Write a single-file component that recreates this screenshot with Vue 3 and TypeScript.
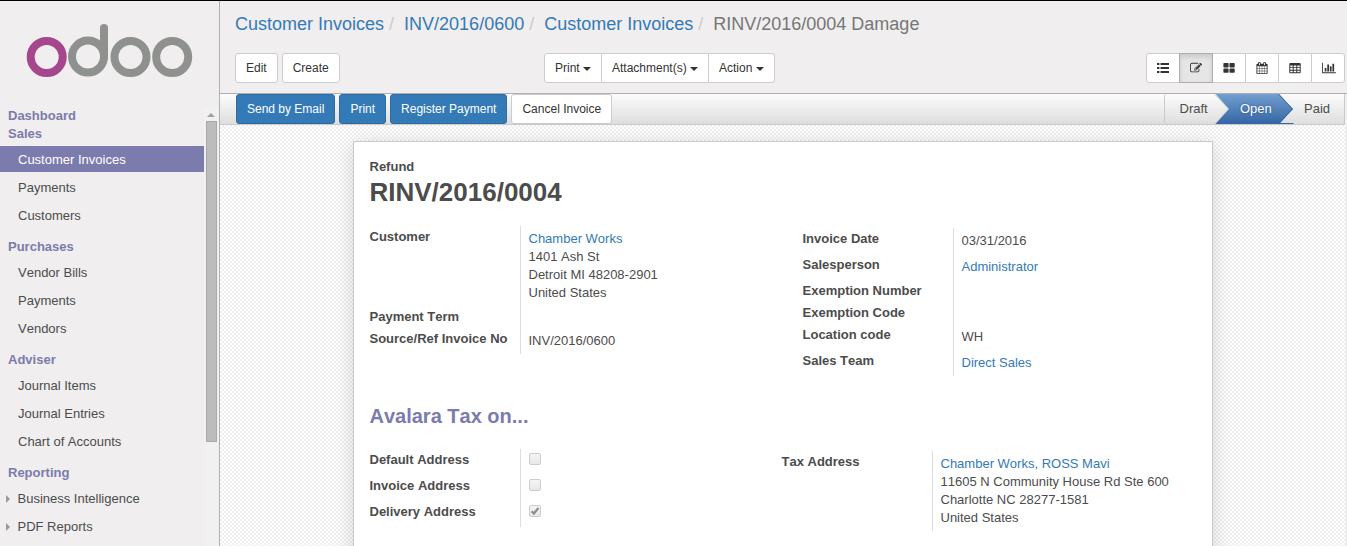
<script setup lang="ts">
interface MenuItem { label: string; active?: boolean; expandable?: boolean }
interface MenuSection { title: string; items: MenuItem[] }
interface Field { label: string; lines?: string[]; link?: boolean; check?: 'on' | 'off' }

const sections: MenuSection[] = [
  { title: 'Dashboard', items: [] },
  { title: 'Sales', items: [{ label: 'Customer Invoices', active: true }, { label: 'Payments' }, { label: 'Customers' }] },
  { title: 'Purchases', items: [{ label: 'Vendor Bills' }, { label: 'Payments' }, { label: 'Vendors' }] },
  { title: 'Adviser', items: [{ label: 'Journal Items' }, { label: 'Journal Entries' }, { label: 'Chart of Accounts' }] },
  { title: 'Reporting', items: [{ label: 'Business Intelligence', expandable: true }, { label: 'PDF Reports', expandable: true }] },
]

const crumbs = ['Customer Invoices', 'INV/2016/0600', 'Customer Invoices']
const menus = ['Print', 'Attachment(s)', 'Action']

const customerFields: Field[] = [
  { label: 'Customer', lines: ['Chamber Works', '1401 Ash St', 'Detroit MI 48208-2901', 'United States'], link: true },
  { label: 'Payment Term' },
  { label: 'Source/Ref Invoice No', lines: ['INV/2016/0600'] },
]
const invoiceFields: Field[] = [
  { label: 'Invoice Date', lines: ['03/31/2016'] },
  { label: 'Salesperson', lines: ['Administrator'], link: true },
  { label: 'Exemption Number' },
  { label: 'Exemption Code' },
  { label: 'Location code', lines: ['WH'] },
  { label: 'Sales Team', lines: ['Direct Sales'], link: true },
]
const addressFields: Field[] = [
  { label: 'Default Address', check: 'off' },
  { label: 'Invoice Address', check: 'off' },
  { label: 'Delivery Address', check: 'on' },
]
const taxFields: Field[] = [
  { label: 'Tax Address', lines: ['Chamber Works, ROSS Mavi', '11605 N Community House Rd Ste 600', 'Charlotte NC 28277-1581', 'United States'], link: true },
]
const groups = [
  { key: 'customer', fields: customerFields },
  { key: 'invoice', fields: invoiceFields },
  { key: 'address', fields: addressFields },
  { key: 'tax', fields: taxFields },
]
const groupRows = [groups.slice(0, 2), groups.slice(2)]
</script>

<template>
  <div class="app">
    <aside class="sidebar">
      <svg class="logo" viewBox="0 0 219 105" fill="none" stroke-width="8">
        <circle cx="46.7" cy="57" r="16" stroke="#a6468d" />
        <g stroke="#8f918f">
          <circle cx="88" cy="56.6" r="16" />
          <path d="M104 57V28" stroke-linecap="round" />
          <circle cx="130.5" cy="57" r="16" />
          <circle cx="172.2" cy="57" r="16" />
        </g>
      </svg>
      <div class="menu-area">
        <nav class="menu">
          <section v-for="s in sections" :key="s.title" class="menu-section" :class="{ filled: s.items.length }">
            <h4>{{ s.title }}</h4>
            <ul v-if="s.items.length">
              <li v-for="i in s.items" :key="i.label" :class="{ active: i.active, expandable: i.expandable }">
                <svg v-if="i.expandable" class="tri" viewBox="0 0 4 8"><path d="M0 0L4 4L0 8Z" fill="#999" /></svg>{{ i.label }}
              </li>
            </ul>
          </section>
        </nav>
        <div class="scrollbar">
          <svg class="up" viewBox="0 0 8 4"><path d="M0 4L4 0L8 4Z" fill="#a0a0a0" /></svg>
          <div class="thumb"></div>
        </div>
      </div>
    </aside>

    <main class="main">
      <header class="control">
        <ol class="breadcrumb">
          <li v-for="(c, n) in crumbs" :key="n"><a>{{ c }}</a></li>
          <li>RINV/2016/0004 Damage</li>
        </ol>
        <div class="toolbar">
          <div class="left">
            <button class="btn">Edit</button>
            <button class="btn">Create</button>
          </div>
          <div class="group">
            <button v-for="m in menus" :key="m" class="btn">{{ m }}<i class="caret"></i></button>
          </div>
          <div class="group switcher">
            <button class="btn">
              <svg width="12" height="12" viewBox="0 0 12 12">
                <path d="M0 1h2.4v2H0zM0 5h2.4v2H0zM0 9h2.4v2H0zM3.5 1H12v2H3.5zM3.5 5H12v2H3.5zM3.5 9H12v2H3.5z" />
              </svg>
            </button>
            <button class="btn on">
              <svg width="12" height="12" viewBox="0 0 1792 1792">
                <path d="M888 1184l116-116-152-152-116 116v56h96v96h56zm440-720q-16-16-33 1l-350 350q-17 17-1 33t33-1l350-350q17-17 1-33zm80 594v190q0 119-84.5 203.5t-203.5 84.5h-832q-119 0-203.5-84.5t-84.5-203.5v-832q0-119 84.5-203.5t203.5-84.5h832q63 0 117 25 15 7 18 23 3 17-9 29l-49 49q-14 14-32 8-23-6-45-6h-832q-66 0-113 47t-47 113v832q0 66 47 113t113 47h832q66 0 113-47t47-113v-126q0-13 9-22l64-64q15-15 35-7t20 29zm-96-738l288 288-672 672h-288v-288zm444 132l-92 92-288-288 92-92q28-28 68-28t68 28l152 152q28 28 28 68t-28 68z" />
              </svg>
            </button>
            <button class="btn">
              <svg width="12" height="12" viewBox="0 0 12 12">
                <rect x="0.4" y="1" width="5.2" height="4.4" rx=".7" /><rect x="6.5" y="1" width="5.2" height="4.4" rx=".7" />
                <rect x="0.4" y="6.4" width="5.2" height="4.4" rx=".7" /><rect x="6.5" y="6.4" width="5.2" height="4.4" rx=".7" />
              </svg>
            </button>
            <button class="btn">
              <svg width="12" height="12" viewBox="0 0 1792 1792">
                <path d="M192 1664h288v-288h-288v288zm352 0h320v-288h-320v288zm-352-352h288v-320h-288v320zm352 0h320v-320h-320v320zm-352-384h288v-288h-288v288zm736 736h320v-288h-320v288zm-384-736h320v-288h-320v288zm768 736h288v-288h-288v288zm-384-352h320v-320h-320v320zm-352-864v-288q0-13-9.5-22.5t-22.5-9.5h-64q-13 0-22.5 9.5t-9.5 22.5v288q0 13 9.5 22.5t22.5 9.5h64q13 0 22.5-9.5t9.5-22.5zm736 864h288v-320h-288v320zm-384-384h320v-288h-320v288zm384 0h288v-288h-288v288zm32-480v-288q0-13-9.5-22.5t-22.5-9.5h-64q-13 0-22.5 9.5t-9.5 22.5v288q0 13 9.5 22.5t22.5 9.5h64q13 0 22.5-9.5t9.5-22.5zm384-64v1280q0 52-38 90t-90 38h-1408q-52 0-90-38t-38-90v-1280q0-52 38-90t90-38h128v-96q0-66 47-113t113-47h64q66 0 113 47t47 113v96h384v-96q0-66 47-113t113-47h64q66 0 113 47t47 113v96h128q52 0 90 38t38 90z" />
              </svg>
            </button>
            <button class="btn">
              <svg width="12" height="12" viewBox="0 0 12 12">
                <path fill-rule="evenodd" d="M1.3 1h9.4q1 0 1 1v8.2q0 1-1 1H1.3q-1 0-1-1V2q0-1 1-1zM1.3 3.5v1.7h2.4V3.5zM4.7 3.5v1.7h2.6V3.5zM8.3 3.5v1.7h2.4V3.5zM1.3 6.1v1.7h2.4V6.1zM4.7 6.1v1.7h2.6V6.1zM8.3 6.1v1.7h2.4V6.1zM1.3 8.7v1.6h2.4V8.7zM4.7 8.7v1.6h2.6V8.7zM8.3 8.7v1.6h2.4V8.7z" />
              </svg>
            </button>
            <button class="btn chart">
              <svg width="14" height="12" viewBox="0 0 2048 1792">
                <path d="M640 896v512h-256v-512h256zm384-512v1024h-256v-1024h256zm1024 1152v128h-2048v-1536h128v1408h1920zm-640-896v768h-256v-768h256zm384-384v1152h-256v-1152h256z" />
              </svg>
            </button>
          </div>
        </div>
      </header>

      <div class="view">
        <div class="statusbar">
          <div class="actions">
            <button class="btn primary">Send by Email</button>
            <button class="btn primary">Print</button>
            <button class="btn primary">Register Payment</button>
            <button class="btn">Cancel Invoice</button>
          </div>
          <div class="steps">
            <span class="step draft">Draft</span>
            <span class="step open"><svg viewBox="0 0 78 30">
              <defs>
                <linearGradient id="openFill" x1="0" y1="0" x2="0" y2="1">
                  <stop offset="0" stop-color="#729fcf" /><stop offset="1" stop-color="#3465a4" />
                </linearGradient>
              </defs>
              <path d="M-1.5 0L12.5 15L-1.5 30" fill="none" stroke="#d2d2d2" />
              <path d="M-.5 0H63L77 15L64 29H77.5V30H-.5L13 15Z" fill="url(#openFill)" />
              <path d="M62.5 0L76.5 15L63.5 29" fill="none" stroke="#3465a4" />
            </svg><b>Open</b></span>
            <span class="step paid">Paid</span>
          </div>
        </div>
        <div class="canvas">
          <article class="sheet">
            <div class="kind">Refund</div>
            <h1>RINV/2016/0004</h1>
            <template v-for="(row, r) in groupRows" :key="r">
              <h2 v-if="r === 1">Avalara Tax on...</h2>
              <div class="columns">
                <dl v-for="g in row" :key="g.key" class="fields" :class="g.key">
                  <template v-for="f in g.fields" :key="f.label">
                    <dt>{{ f.label }}</dt>
                    <dd :class="{ filled: f.lines || f.check }">
                      <div v-for="(l, n) in f.lines" :key="l" :class="{ link: f.link && n === 0 }">{{ l }}</div>
                      <span v-if="f.check" class="check"><svg v-if="f.check === 'on'" viewBox="0 0 12 12">
                        <path d="M2.6 6.2L4.9 8.5L9.4 3" fill="none" stroke="#8f8f8f" stroke-width="2.3" />
                      </svg></span>
                    </dd>
                  </template>
                </dl>
              </div>
            </template>
          </article>
        </div>
      </div>
    </main>
  </div>
</template>

<style>
html, body { margin: 0; overflow: hidden; }
</style>

<style scoped>
* { box-sizing: border-box; }
.app {
  display: flex; width: 1347px; height: 546px; overflow: hidden;
  border-top: 1px solid #000; background: #f0eeee; color: #4c4c4c;
  font: 13px/18px "Liberation Sans", Arial, sans-serif; font-kerning: none;
}
ul, ol, dl, dd, h1, h2, h4 { margin: 0; padding: 0; list-style: none; }
button { font-family: inherit; font-kerning: none; margin: 0; }

.sidebar { width: 220px; flex: none; border-right: 1px solid #afafb6; display: flex; flex-direction: column; }
.logo { display: block; width: 219px; height: 105px; margin-top: -1px; flex: none; }
.menu-area { display: flex; flex: 1; min-height: 0; margin-top: 1px; }
.menu { flex: 1; overflow: hidden; }
.menu-section.filled { padding-bottom: 9px; }
h4 { color: #7c7bad; font-size: 13px; height: 18px; line-height: 20px; padding-left: 8px; }
.menu ul { display: grid; gap: 2px; padding-top: 4px; }
.menu li { height: 26px; padding: 5px 0 3px 18px; display: flex; align-items: center; }
.menu li.active { background: #7c7bad; color: #fff; }
.menu li.expandable { padding-left: 6px; gap: 8px; }
.tri { width: 4px; height: 8px; margin-right: -.5px; }
.scrollbar { width: 15px; background: #f1f1f1; padding: 7px 2px 0; margin-top: 1px; }
.up { display: block; width: 8px; height: 4px; margin: -1px 0 4px 1px; }
.thumb { width: 11px; height: 321px; background: #bcbcbc; border: 1px solid #a8a8a8; }

.main { flex: 1; min-width: 0; display: flex; flex-direction: column; }
.control { height: 93px; border-bottom: 1px solid #afafb6; padding: 10px 2px 0 15px; }
.breadcrumb { display: flex; font-size: 18px; line-height: 26px; color: #777; }
.breadcrumb li + li::before { content: "/\00a0"; padding: 0 5px; color: #ccc; }
.breadcrumb a, .link { color: #337ab7; }
.toolbar { display: grid; grid-template-columns: 309px 1fr auto; margin-top: 16px; }
.left { display: flex; gap: 4px; }
.btn {
  height: 30px; padding: 5px 10px; border: 1px solid #ccc; border-radius: 3px; background: #fff;
  color: #333; font-size: 12px; line-height: 18px; white-space: nowrap;
}
.btn svg { fill: #333; display: block; }
.group { display: flex; }
.group .btn { border-radius: 0; display: flex; align-items: center; justify-content: center; }
.group .btn + .btn { margin-left: -1px; }
.group .btn:first-child { border-radius: 3px 0 0 3px; }
.group .btn:last-child { border-radius: 0 3px 3px 0; }
.caret { margin: 1px 0 0 3.3px; border: 4px solid transparent; border-top-color: #333; border-bottom: 0; }
.switcher .btn { width: 34px; padding: 0; }
.switcher .chart { padding-left: 2px; }
.switcher .on { background: #e6e6e6; border-color: #adadad; box-shadow: inset 0 3px 5px rgba(0, 0, 0, .125); z-index: 1; }

.view { flex: 1; min-height: 0; width: 1125px; display: flex; flex-direction: column; }
.statusbar {
  height: 31px; flex: none; display: flex; justify-content: space-between; padding-left: 16px;
  border-bottom: 1px solid #cacaca; background: linear-gradient(#fcfcfc, #dedede);
}
.actions { display: flex; gap: 4px; }
.primary { background: #337ab7; border-color: #2e6da4; color: #fff; }
.steps {
  display: flex; width: 181px; height: 30px; line-height: 30px; border-left: 1px solid #cacaca;
  border-right: 1px solid #cacaca; border-radius: 3px 0 0 3px;
}
.draft { width: 51px; padding-left: 14.5px; }
.open { width: 78px; height: 30px; position: relative; padding-left: 24px; color: #fff; }
.open svg { position: absolute; inset: 0; width: 78px; height: 30px; overflow: visible; }
.open b { position: relative; font-weight: normal; text-shadow: 0 0 2px #2b4c7e; }
.paid { padding-left: 10px; }

.canvas {
  flex: 1; min-height: 0; overflow: hidden; padding: 16px 132px 0 133px;
  background: conic-gradient(#eee 25%, #fff 0 50%, #eee 0 75%, #fff 0) 0 0 / 4px 4px;
}
.sheet {
  width: 860px; height: 500px; padding: 16px 16px 16px 15.5px; background: #fff;
  border: 1px solid #c8c8d3; box-shadow: 0 4px 20px rgba(0, 0, 0, .15);
}
.kind { font-weight: bold; }
h1 { font-size: 26px; line-height: 32px; padding-bottom: 2px; }
h2 { color: #7c7bad; font-size: 20px; line-height: 24px; margin-top: 28px; margin-bottom: 21px; }
.columns { display: flex; align-items: flex-start; }
.fields { display: grid; grid-template-columns: 150px auto; }
dt { font-weight: bold; padding: 2px 0; white-space: nowrap; }
dd { border-left: 1px solid #ddd; padding: 2px 0 2px 8px; white-space: nowrap; }
dd.filled { padding: 4px 0 4px 8px; }
.customer { width: 433px; margin-top: 16px; }
.invoice { margin-top: 18px; }
.address { width: 412px; }
.tax { margin-top: 2px; }
.check {
  display: block; width: 12px; height: 12px; margin-bottom: 6px; border: 1px solid #ccc; border-radius: 2px;
  background: linear-gradient(#f4f4f4, #e8e8e8);
}
.check svg { display: block; width: 12px; height: 12px; margin: -1px; }
</style>
